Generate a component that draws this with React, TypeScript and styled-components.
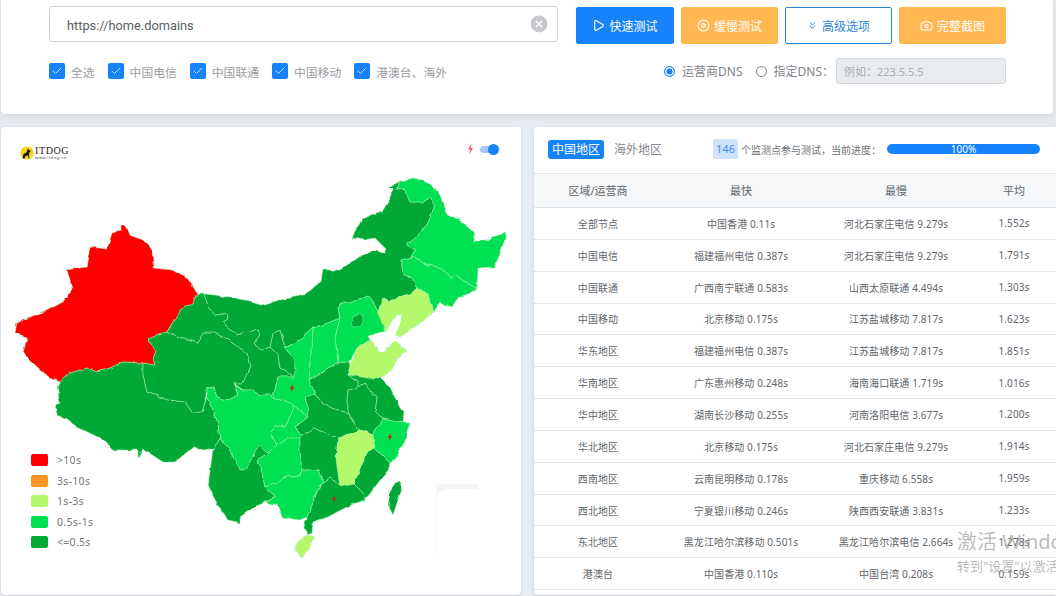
import React from 'react';
import styled, { createGlobalStyle } from 'styled-components';
import { Camera, Check, ChevronsDown, CirclePlay, Play } from 'lucide-react';

const COLORS = {
  red: '#ff0000',
  orange: '#ff9526',
  light: '#b4f86c',
  mid: '#00e052',
  dark: '#03a935',
};

const PROVINCES: { name: string; fill: string; points: string }[] = [
  { name: '新疆', fill: COLORS.red, points: '125,225 129,235 143,240 150,247 154,259 153,268 172,270 188,279 197,293 193,303 180,310 167,332 148,339 156,352 153,358 155,365 143,363 123,362 110,368 97,372 87,368 70,373 60,382 50,378 35,365 23,353 27,338 15,332 17,323 30,317 40,313 52,307 68,298 72,288 67,270 86,267 90,247 107,249 112,233 120,231 122,225' },
  { name: '西藏', fill: COLORS.dark, points: '143,363 123,362 110,368 97,372 87,368 70,373 60,382 57,387 60,403 55,405 58,415 77,427 100,438 115,450 138,450 138,458 143,449 163,462 175,462 192,448 205,450 213,448 220,440 218,423 207,397 205,402 202,412 192,412 185,402 168,400 147,392 143,375' },
  { name: '青海', fill: COLORS.dark, points: '148,339 167,332 180,337 198,342 203,333 215,333 228,340 247,353 250,367 243,383 233,383 238,395 227,400 217,397 213,387 207,388 205,402 202,412 192,412 185,402 168,400 147,392 143,375 143,363 155,365 153,358 156,352' },
  { name: '甘肃', fill: COLORS.dark, points: '197,293 204,293 208,307 215,315 227,313 228,320 223,323 237,335 242,332 258,330 260,335 254,343 262,350 270,347 278,355 280,368 295,377 278,377 273,398 270,395 260,395 253,390 243,390 233,383 243,383 250,367 247,353 228,340 215,333 203,333 198,342 180,337 167,332 180,310 193,303' },
  { name: '宁夏', fill: COLORS.dark, points: '270,347 273,333 280,330 282,337 285,348 295,360 295,377 280,368 278,355' },
  { name: '内蒙古', fill: COLORS.dark, points: '388,187 400,181 397,188 405,190 410,202 422,202 430,198 435,205 428,223 422,232 407,245 415,250 411,257 401,260 403,272 413,280 417,287 412,293 398,297 388,302 383,298 378,312 372,300 368,295 350,303 343,302 338,308 340,318 328,323 313,328 300,340 285,348 282,337 280,330 273,333 270,347 262,350 254,343 260,335 258,330 242,332 237,335 223,323 228,320 227,313 215,315 208,307 204,293 197,293 230,297 250,301 265,305 280,300 305,295 320,282 322,270 340,270 358,257 373,251 385,252 385,248 375,238 365,240 352,238 362,219 382,212 392,195 393,188' },
  { name: '黑龙江', fill: COLORS.mid, points: '400,181 415,178 432,185 440,195 447,213 462,222 473,233 475,241 487,241 492,237 506,233 503,245 495,267 478,268 477,288 465,282 455,275 450,278 442,268 428,265 415,257 411,257 415,250 407,245 422,232 428,223 435,205 430,198 422,202 410,202 405,190 397,188' },
  { name: '吉林', fill: COLORS.mid, points: '401,260 411,257 415,257 428,265 442,268 450,278 455,275 465,282 477,288 470,293 458,297 452,307 440,303 433,312 428,295 417,287 413,280 403,272' },
  { name: '河北', fill: COLORS.mid, points: '340,318 338,308 343,302 350,303 368,295 372,300 378,312 386,331 368,336 370,340 357,348 349,363 338,362 335,338' },
  { name: '辽宁', fill: COLORS.light, points: '417,287 428,295 433,312 422,322 400,337 395,335 400,325 402,315 397,315 385,332 378,312 383,298 388,302 398,297 412,293' },
  { name: '北京', fill: COLORS.dark, points: '351,322 354,316 359,313 363,316 363,322 360,327 353,327' },
  { name: '山东', fill: COLORS.light, points: '370,340 383,353 395,340 407,352 397,358 387,375 380,377 373,380 368,378 347,375 350,366 357,348' },
  { name: '山西', fill: COLORS.mid, points: '313,328 328,323 340,318 335,338 338,362 309,380 310,360 312,347' },
  { name: '陕西', fill: COLORS.mid, points: '285,348 300,340 313,328 312,347 310,360 309,380 315,393 305,398 309,410 308,417 293,405 280,400 273,398 278,377 295,377 295,360' },
  { name: '河南', fill: COLORS.dark, points: '309,380 338,362 349,363 350,366 347,375 358,382 358,388 348,390 347,402 350,413 337,410 322,403 315,393' },
  { name: '江苏', fill: COLORS.dark, points: '347,375 368,378 373,380 380,377 390,387 397,402 403,413 402,422 383,418 375,410 377,398 370,390 365,383 358,388 358,382' },
  { name: '安徽', fill: COLORS.dark, points: '358,388 365,383 370,390 377,398 375,410 383,418 373,435 360,430 356,427 350,413 347,402 348,390' },
  { name: '湖北', fill: COLORS.dark, points: '315,393 322,403 337,410 350,413 356,427 360,430 338,438 313,428 302,435 295,427 308,417 309,410 305,398' },
  { name: '重庆', fill: COLORS.mid, points: '293,405 308,417 295,427 302,435 300,438 287,438 277,445 270,433 277,425 285,427 293,410' },
  { name: '四川', fill: COLORS.mid, points: '207,388 213,387 217,397 227,400 238,395 235,385 242,390 253,390 260,395 270,395 273,398 280,400 293,405 293,410 285,427 277,425 270,433 277,445 268,453 260,445 255,453 245,470 240,470 228,447 220,440 218,423 207,397' },
  { name: '云南', fill: COLORS.dark, points: '213,448 220,440 228,447 240,470 245,470 255,453 260,445 268,453 257,460 262,473 265,487 276,497 265,502 253,508 240,517 240,523 228,520 222,512 208,487' },
  { name: '贵州', fill: COLORS.mid, points: '268,453 277,445 287,438 300,438 300,450 302,470 300,475 283,478 278,483 265,487 262,473 257,460' },
  { name: '湖南', fill: COLORS.dark, points: '300,438 302,435 313,428 338,438 336,457 340,487 332,478 323,483 318,470 302,470 300,450' },
  { name: '广西', fill: COLORS.mid, points: '265,487 278,483 283,478 300,475 302,470 318,470 323,483 320,485 307,518 300,520 282,517 278,505 265,502 276,497' },
  { name: '江西', fill: COLORS.light, points: '338,438 360,430 373,435 375,448 367,453 354,483 345,488 340,487 336,457' },
  { name: '福建', fill: COLORS.dark, points: '375,448 390,463 388,470 365,500 363,493 354,484 367,453' },
  { name: '浙江', fill: COLORS.mid, points: '383,418 402,422 410,422 405,440 395,460 390,463 375,448 373,435' },
  { name: '广东', fill: COLORS.dark, points: '323,483 332,478 340,487 354,484 363,493 365,500 355,503 343,509 337,512 328,517 313,522 312,533 307,535 304,523 307,518 320,485' },
  { name: '海南', fill: COLORS.light, points: '315,537 307,552 302,557 296,552 297,542 308,535' },
  { name: '台湾', fill: COLORS.dark, points: '400,481 402,488 393,515 388,505 390,492 395,483' },
];

const BOLTS = [
  { x: 292, y: 388 },
  { x: 390, y: 437 },
  { x: 334, y: 499 },
];

const LEGEND = [
  { label: '>10s', color: COLORS.red },
  { label: '3s-10s', color: COLORS.orange },
  { label: '1s-3s', color: COLORS.light },
  { label: '0.5s-1s', color: COLORS.mid },
  { label: '<=0.5s', color: COLORS.dark },
];

const ISPS = ['全选', '中国电信', '中国联通', '中国移动', '港澳台、海外'];

const ROWS = [
  ['全部节点', '中国香港 0.11s', '河北石家庄电信 9.279s', '1.552s'],
  ['中国电信', '福建福州电信 0.387s', '河北石家庄电信 9.279s', '1.791s'],
  ['中国联通', '广西南宁联通 0.583s', '山西太原联通 4.494s', '1.303s'],
  ['中国移动', '北京移动 0.175s', '江苏盐城移动 7.817s', '1.623s'],
  ['华东地区', '福建福州电信 0.387s', '江苏盐城移动 7.817s', '1.851s'],
  ['华南地区', '广东惠州移动 0.248s', '海南海口联通 1.719s', '1.016s'],
  ['华中地区', '湖南长沙移动 0.255s', '河南洛阳电信 3.677s', '1.200s'],
  ['华北地区', '北京移动 0.175s', '河北石家庄电信 9.279s', '1.914s'],
  ['西南地区', '云南昆明移动 0.178s', '重庆移动 6.558s', '1.959s'],
  ['西北地区', '宁夏银川移动 0.246s', '陕西西安联通 3.831s', '1.233s'],
  ['东北地区', '黑龙江哈尔滨移动 0.501s', '黑龙江哈尔滨电信 2.664s', '1.278s'],
  ['港澳台', '中国香港 0.110s', '中国台湾 0.208s', '0.159s'],
];

const App = () => {
  return (
    <Page>
      <GlobalStyle />
      <TopCard>
        <FormRow>
          <UrlField>
            <UrlText>https://home.domains</UrlText>
            <svg width="18" height="18" viewBox="0 0 18 18">
              <circle cx="9" cy="9" r="8.5" fill="#c6c8cb" />
              <path d="M6 6l6 6M12 6l-6 6" stroke="#fff" strokeWidth="1.3" />
            </svg>
          </UrlField>
          <Buttons>
            <ActionButton $variant="primary" $width={98}>
              <Play size={13} />
              快速测试
            </ActionButton>
            <ActionButton $variant="warning" $width={97}>
              <CirclePlay size={13} />
              缓慢测试
            </ActionButton>
            <ActionButton $variant="outline" $width={107}>
              <ChevronsDown size={11} />
              高级选项
            </ActionButton>
            <ActionButton $variant="warning" $width={107}>
              <Camera size={13} />
              完整截图
            </ActionButton>
          </Buttons>
        </FormRow>
        <OptionRow>
          <CheckGroup>
            {ISPS.map((isp) => (
              <CheckItem key={isp}>
                <CheckBox>
                  <Check size={12} strokeWidth={1.6} />
                </CheckBox>
                {isp}
              </CheckItem>
            ))}
          </CheckGroup>
          <DnsGroup>
            <RadioItem>
              <Radio $checked />
              运营商DNS
            </RadioItem>
            <RadioItem>
              <Radio />
              指定DNS：
            </RadioItem>
            <DnsInput>例如：223.5.5.5</DnsInput>
          </DnsGroup>
        </OptionRow>
      </TopCard>

      <BottomRow>
        <MapCard>
          <Logo>
            <svg width="14" height="14" viewBox="0 0 14 14">
              <circle cx="7" cy="7" r="6.6" fill="#f7d11e" />
              <path d="M2.5 12.5l1-4.5 3-1.5 1.5-4 1 1.5 2 1-1.5 1.2-.7 3 .7 3H8.5L8 9.5 5.5 10l-1 2.5z" fill="#17140c" />
            </svg>
            <LogoText>
              <LogoName>ITDOG</LogoName>
              <LogoSite>www.itdog.cn</LogoSite>
            </LogoText>
          </Logo>
          <MapSwitch>
            <svg width="7" height="12" viewBox="0 0 7 12">
              <path d="M4.5.5L1 6.5h2.4L2.3 11.5 6 5H3.6z" fill="#f25555" />
            </svg>
            <SwitchTrack>
              <SwitchKnob />
            </SwitchTrack>
          </MapSwitch>
          <MapSvg viewBox="1 127 520 468">
            <defs>
              <filter id="rough" filterUnits="userSpaceOnUse" x="1" y="127" width="520" height="468">
                <feTurbulence type="fractalNoise" baseFrequency="0.11" numOctaves="2" seed="4" result="noise" />
                <feDisplacementMap in="SourceGraphic" in2="noise" scale="4" xChannelSelector="R" yChannelSelector="G" />
                <feGaussianBlur stdDeviation="0.25" />
              </filter>
            </defs>
            <path d="M436 484h42v5h-30l-11 4zM436 490v64h1v-64z" fill="#f6f6f6" />
            <g filter="url(#rough)">
              {PROVINCES.map((p) => (
                <polygon key={p.name} points={p.points} fill={p.fill} stroke="#a9f5b4" strokeOpacity="0.85" strokeWidth="0.6" strokeLinejoin="round" />
              ))}
            </g>
            {BOLTS.map((b) => (
              <path key={b.x} transform={`translate(${b.x} ${b.y})`} d="M1-4L-2.2.6H-.3L-1.2 4 2.2-.8H.3z" fill="#d80f0f" />
            ))}
          </MapSvg>
          <Legend>
            {LEGEND.map((item) => (
              <LegendItem key={item.label}>
                <LegendSwatch $color={item.color} />
                {item.label}
              </LegendItem>
            ))}
          </Legend>
        </MapCard>

        <TableCard>
          <TableHead>
            <Tab $active>中国地区</Tab>
            <Tab>海外地区</Tab>
            <Progress>
              <CountBadge>146</CountBadge>
              <ProgressLabel>个监测点参与测试，当前进度：</ProgressLabel>
              <ProgressBar>100%</ProgressBar>
            </Progress>
          </TableHead>
          <HeaderRow>
            <span>区域/运营商</span>
            <span>最快</span>
            <span>最慢</span>
            <span>平均</span>
          </HeaderRow>
          {ROWS.map((row) => (
            <DataRow key={row[0]}>
              {row.map((cell) => (
                <span key={cell}>{cell}</span>
              ))}
            </DataRow>
          ))}
        </TableCard>
      </BottomRow>

      <Watermark>
        <WatermarkTitle>激活 Windows</WatermarkTitle>
        <WatermarkHint>转到"设置"以激活 Windows。</WatermarkHint>
      </Watermark>
    </Page>
  );
};

export default App;

const GlobalStyle = createGlobalStyle`
  html, body {
    margin: 0;
    padding: 0;
    overflow: hidden;
  }
  body {
    font-family: "Noto Sans", "Noto Sans CJK SC", sans-serif;
  }
`;

const Page = styled.div`
  position: relative;
  width: 1056px;
  height: 596px;
  overflow: hidden;
  background: #e7ecf2;
  display: flex;
  flex-direction: column;
  gap: 13px;
  padding-left: 1px;
  box-sizing: border-box;
`;

const TopCard = styled.div`
  width: 1052px;
  height: 114px;
  flex-shrink: 0;
  box-sizing: border-box;
  padding: 6px 47px 0 48px;
  background: #fff;
  border-radius: 0 0 4px 4px;
  box-shadow: 0 2px 6px rgba(120, 130, 150, 0.22);
`;

const FormRow = styled.div`
  display: flex;
  gap: 18px;
`;

const UrlField = styled.div`
  width: 509px;
  height: 36px;
  box-sizing: border-box;
  display: flex;
  align-items: center;
  justify-content: space-between;
  padding: 0 9px 0 17px;
  border: 1px solid #ced1d6;
  border-radius: 3px;
`;

const UrlText = styled.span`
  font-family: Roboto, sans-serif;
  font-size: 12.8px;
  padding-top: 2px;
  color: #5a5e63;
`;

const Buttons = styled.div`
  display: flex;
  gap: 7px;
  padding-top: 1px;
`;

const VARIANTS = {
  primary: 'background: #1783fb; color: #fff; border: 1px solid #1783fb;',
  warning: 'background: #ffb752; color: #fff; border: 1px solid #ffb752;',
  outline: 'background: #fff; color: #2a86d9; border: 1px solid #2a86d9;',
};

const ActionButton = styled.div<{ $variant: keyof typeof VARIANTS; $width: number }>`
  ${(p) => VARIANTS[p.$variant]}
  width: ${(p) => p.$width}px;
  height: 37px;
  box-sizing: border-box;
  border-radius: 2px;
  display: flex;
  align-items: center;
  justify-content: center;
  gap: 4px;
  font-size: 12px;
`;

const OptionRow = styled.div`
  display: flex;
  justify-content: space-between;
  align-items: center;
  margin-top: 14px;
`;

const CheckGroup = styled.div`
  display: flex;
  gap: 13px;
`;

const CheckItem = styled.label`
  display: flex;
  align-items: center;
  gap: 6px;
  font-size: 11.8px;
  color: #9a9da1;
`;

const CheckBox = styled.span`
  width: 16px;
  height: 16px;
  border-radius: 2px;
  background: #1783fb;
  color: #e6f2ff;
  display: flex;
  align-items: center;
  justify-content: center;
`;

const DnsGroup = styled.div`
  display: flex;
  align-items: center;
  gap: 13px;
`;

const RadioItem = styled.label`
  display: flex;
  align-items: center;
  gap: 7px;
  font-size: 12px;
  color: #808489;
`;

const Radio = styled.span<{ $checked?: boolean }>`
  width: 11px;
  height: 11px;
  border-radius: 50%;
  box-sizing: border-box;
  border: 1px solid ${(p) => (p.$checked ? '#1783fb' : '#7d7f82')};
  background: ${(p) => (p.$checked ? '#1783fb' : '#fff')};
  box-shadow: ${(p) => (p.$checked ? 'inset 0 0 0 1.5px #fff' : 'none')};
`;

const DnsInput = styled.div`
  width: 170px;
  height: 26px;
  box-sizing: border-box;
  margin-left: -11px;
  padding-left: 7px;
  display: flex;
  align-items: center;
  font-size: 11px;
  color: #a9adb2;
  background: #e9ecef;
  border: 1px solid #d4d8dc;
  border-radius: 3px;
`;

const BottomRow = styled.div`
  display: flex;
  gap: 13px;
  flex: 1;
  min-height: 0;
`;

const MapCard = styled.div`
  position: relative;
  width: 520px;
  flex-shrink: 0;
  height: 468px;
  background: #fff;
  border-radius: 4px;
  box-shadow: 0 1px 3px rgba(120, 130, 150, 0.3);
`;

const MapSvg = styled.svg`
  display: block;
  width: 520px;
  height: 468px;
`;

const Logo = styled.div`
  position: absolute;
  left: 19px;
  top: 19px;
  display: flex;
  align-items: center;
  gap: 1px;
`;

const LogoText = styled.div`
  display: flex;
  flex-direction: column;
`;

const LogoName = styled.span`
  font-family: "Liberation Serif", serif;
  font-size: 10px;
  line-height: 9px;
  letter-spacing: 0.6px;
  color: #26241f;
`;

const LogoSite = styled.span`
  font-size: 4px;
  line-height: 5px;
  letter-spacing: 0.5px;
  color: #444;
`;

const MapSwitch = styled.div`
  position: absolute;
  left: 466px;
  top: 16px;
  display: flex;
  align-items: center;
  gap: 6px;
`;

const SwitchTrack = styled.div`
  position: relative;
  width: 18px;
  height: 7px;
  border-radius: 3.5px;
  background: #a9c6fa;
`;

const SwitchKnob = styled.div`
  position: absolute;
  right: -1px;
  top: -2px;
  width: 11px;
  height: 11px;
  border-radius: 50%;
  background: #1783fb;
`;

const Legend = styled.div`
  position: absolute;
  left: 30px;
  top: 327px;
  display: flex;
  flex-direction: column;
  gap: 8.5px;
`;

const LegendItem = styled.div`
  display: flex;
  align-items: center;
  gap: 9px;
  height: 12px;
  font-size: 10.5px;
  letter-spacing: 0.3px;
  color: #74777b;
`;

const LegendSwatch = styled.span<{ $color: string }>`
  width: 17px;
  height: 12px;
  border-radius: 2px;
  background: ${(p) => p.$color};
`;

const TableCard = styled.div`
  flex: 1;
  min-width: 0;
  background: #fff;
  border-radius: 4px 0 0 4px;
  height: 468px;
  box-shadow: 0 1px 3px rgba(120, 130, 150, 0.3);
`;

const TableHead = styled.div`
  height: 46px;
  box-sizing: border-box;
  padding: 13px 16px 0 14px;
  display: flex;
  align-items: flex-start;
  gap: 10px;
`;

const Tab = styled.span<{ $active?: boolean }>`
  height: 19px;
  line-height: 19px;
  padding: 0 ${(p) => (p.$active ? '4px' : '0')};
  font-size: 12px;
  border-radius: 3px;
  color: ${(p) => (p.$active ? '#fff' : '#85888c')};
  background: ${(p) => (p.$active ? '#1783fb' : 'transparent')};
`;

const Progress = styled.div`
  margin-left: auto;
  margin-top: -1px;
  display: flex;
  align-items: center;
  height: 20px;
`;

const CountBadge = styled.span`
  width: 25px;
  height: 20px;
  line-height: 20px;
  text-align: center;
  font-size: 11px;
  color: #3b8ff0;
  background: #cfe3fb;
  border-radius: 2px;
`;

const ProgressLabel = styled.span`
  margin: 0 6px 0 3px;
  font-size: 10px;
  color: #6d7074;
`;

const ProgressBar = styled.div`
  width: 153px;
  height: 10px;
  line-height: 10px;
  text-align: center;
  font-size: 10px;
  color: #fff;
  background: #1783fb;
  border-radius: 5px;
`;

const TableGrid = styled.div`
  display: grid;
  grid-template-columns: 128px 158px 152px 84px;
  align-items: center;
  justify-items: center;
  box-sizing: border-box;
  border-bottom: 1px solid #e3e6e9;
  white-space: nowrap;
`;

const HeaderRow = styled(TableGrid)`
  height: 35px;
  padding-bottom: 1px;
  background: #f5f7f8;
  border-top: 1px solid #e3e6e9;
  font-size: 11px;
  color: #62666a;
`;

const DataRow = styled(TableGrid)`
  height: 31.85px;
  font-size: 10px;
  letter-spacing: 0.1px;
  color: #62666a;
`;

const Watermark = styled.div`
  position: absolute;
  left: 957px;
  top: 529px;
  width: 200px;
  white-space: nowrap;
  color: rgba(130, 130, 130, 0.55);
`;

const WatermarkTitle = styled.div`
  font-size: 20px;
  line-height: 26px;
`;

const WatermarkHint = styled.div`
  font-size: 13px;
  line-height: 22px;
`;
